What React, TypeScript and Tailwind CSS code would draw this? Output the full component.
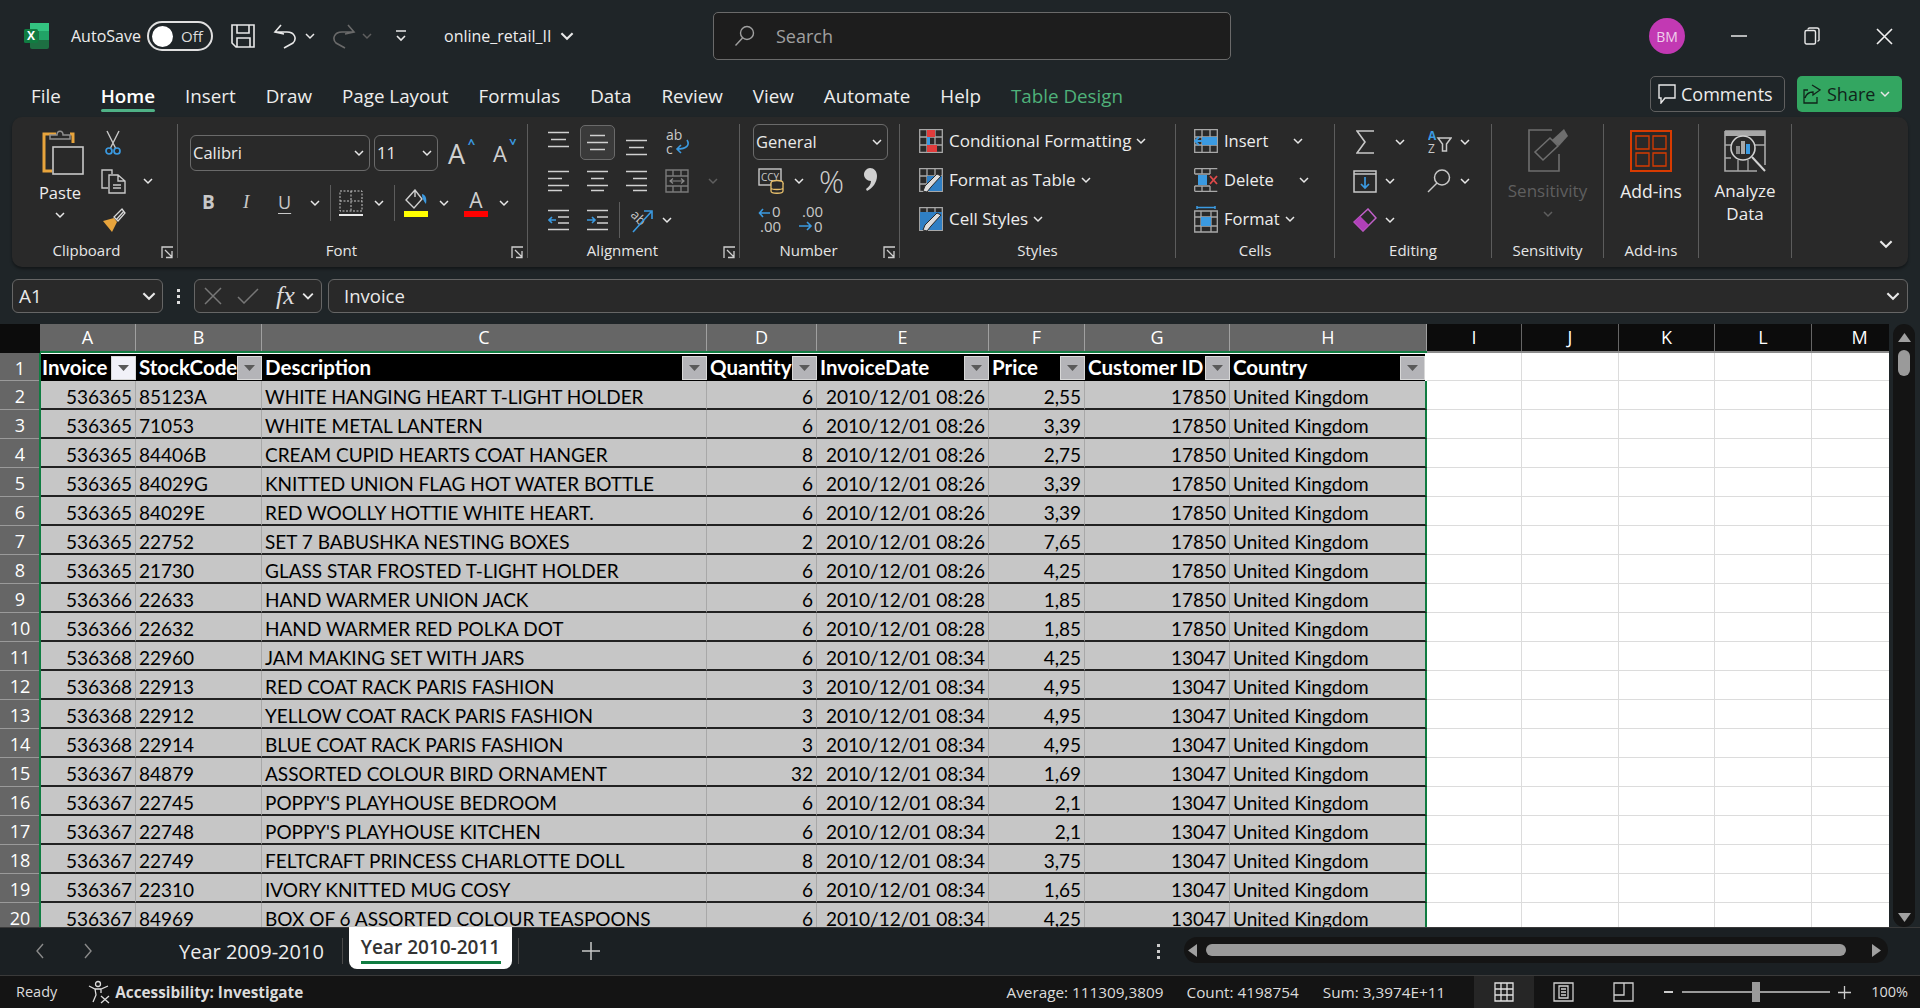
import type { ReactNode } from 'react';

const ui = "font-['Open_Sans',sans-serif]";
const cellFont = "font-['Lato',sans-serif]";

const ROWS = [
  ['536365', '85123A', 'WHITE HANGING HEART T-LIGHT HOLDER', '6', '2010/12/01 08:26', '2,55', '17850'],
  ['536365', '71053', 'WHITE METAL LANTERN', '6', '2010/12/01 08:26', '3,39', '17850'],
  ['536365', '84406B', 'CREAM CUPID HEARTS COAT HANGER', '8', '2010/12/01 08:26', '2,75', '17850'],
  ['536365', '84029G', 'KNITTED UNION FLAG HOT WATER BOTTLE', '6', '2010/12/01 08:26', '3,39', '17850'],
  ['536365', '84029E', 'RED WOOLLY HOTTIE WHITE HEART.', '6', '2010/12/01 08:26', '3,39', '17850'],
  ['536365', '22752', 'SET 7 BABUSHKA NESTING BOXES', '2', '2010/12/01 08:26', '7,65', '17850'],
  ['536365', '21730', 'GLASS STAR FROSTED T-LIGHT HOLDER', '6', '2010/12/01 08:26', '4,25', '17850'],
  ['536366', '22633', 'HAND WARMER UNION JACK', '6', '2010/12/01 08:28', '1,85', '17850'],
  ['536366', '22632', 'HAND WARMER RED POLKA DOT', '6', '2010/12/01 08:28', '1,85', '17850'],
  ['536368', '22960', 'JAM MAKING SET WITH JARS', '6', '2010/12/01 08:34', '4,25', '13047'],
  ['536368', '22913', 'RED COAT RACK PARIS FASHION', '3', '2010/12/01 08:34', '4,95', '13047'],
  ['536368', '22912', 'YELLOW COAT RACK PARIS FASHION', '3', '2010/12/01 08:34', '4,95', '13047'],
  ['536368', '22914', 'BLUE COAT RACK PARIS FASHION', '3', '2010/12/01 08:34', '4,95', '13047'],
  ['536367', '84879', 'ASSORTED COLOUR BIRD ORNAMENT', '32', '2010/12/01 08:34', '1,69', '13047'],
  ['536367', '22745', "POPPY'S PLAYHOUSE BEDROOM", '6', '2010/12/01 08:34', '2,1', '13047'],
  ['536367', '22748', "POPPY'S PLAYHOUSE KITCHEN", '6', '2010/12/01 08:34', '2,1', '13047'],
  ['536367', '22749', 'FELTCRAFT PRINCESS CHARLOTTE DOLL', '8', '2010/12/01 08:34', '3,75', '13047'],
  ['536367', '22310', 'IVORY KNITTED MUG COSY', '6', '2010/12/01 08:34', '1,65', '13047'],
  ['536367', '84969', 'BOX OF 6 ASSORTED COLOUR TEASPOONS', '6', '2010/12/01 08:34', '4,25', '13047'],
];

function Chev({ dim, size = 10 }: { dim?: boolean; size?: number }) {
  return (
    <svg width={size} height={size} viewBox="0 0 10 10" className="shrink-0">
      <path d="M1 3 L5 7 L9 3" fill="none" stroke={dim ? '#5f5f5f' : '#e8e8e8'} strokeWidth="1.5" />
    </svg>
  );
}

function Launcher() {
  return (
    <svg width="13" height="13" viewBox="0 0 13 13" className="shrink-0 mr-[3px] mt-[3px]">
      <path d="M1 12 V1 H12 M4 4 L11 11 M11 5 V11.5 H5" fill="none" stroke="#cfcfcf" strokeWidth="1.3" />
    </svg>
  );
}

function Group({ w, label, launcher, nudge, children }: { w: string; label: string; launcher?: boolean; nudge?: boolean; children: ReactNode }) {
  return (
    <div className={`${w} shrink-0 h-[134px] flex flex-col border-r border-[#5c5c5c]`}>
      <div className="h-[119px]">{children}</div>
      <div className="flex items-center h-[15px] text-[15px] leading-none text-[#e6e6e6]">
        <span className={`flex-1 text-center whitespace-nowrap ${nudge ? 'pr-[6px]' : ''}`}>{label}</span>
        {launcher && <Launcher />}
      </div>
    </div>
  );
}

function Row({ children, className = '' }: { children: ReactNode; className?: string }) {
  return <div className={`h-[36px] mb-[3px] flex items-center ${className}`}>{children}</div>;
}

function Slot({ w = 'w-[39px]', children }: { w?: string; children: ReactNode }) {
  return <div className={`${w} h-full flex items-center justify-center shrink-0`}>{children}</div>;
}

function AlignIcon({ kind }: { kind: 'top' | 'mid' | 'bot' | 'l' | 'c' | 'r' }) {
  const lines: Record<string, string> = {
    top: 'M0 1.5H21M3 8.5H18M0 15.5H21',
    mid: 'M3 1.5H18M0 8.5H21M3 15.5H18',
    bot: 'M0 1.5H21M3 8.5H18M0 15.5H21',
    l: 'M0 1.5H21M0 8.5H14M0 15.5H21M0 20.5H14',
    c: 'M0 1.5H21M4 8.5H17M0 15.5H21M4 20.5H17',
    r: 'M0 1.5H21M7 8.5H21M0 15.5H21M7 20.5H21',
  };
  const isH = kind === 'l' || kind === 'c' || kind === 'r';
  return (
    <svg width="21" height={isH ? 22 : 17} viewBox={isH ? '0 0 21 22' : '0 0 21 17'} className={kind === 'bot' ? 'mt-[10px]' : kind === 'top' ? 'mb-[6px]' : ''}>
      <path d={lines[kind]} stroke="#d0d0d0" strokeWidth="1.6" fill="none" />
    </svg>
  );
}

function IndentIcon({ right }: { right?: boolean }) {
  return (
    <svg width="21" height="22" viewBox="0 0 21 22">
      <path d="M0 1.5H21M10 8H21M10 14H21M0 20.5H21" stroke="#d0d0d0" strokeWidth="1.5" fill="none" />
      <path d={right ? 'M0 11H8M5 8L8 11L5 14' : 'M8 11H1M4 8L1 11L4 14'} stroke="#3b9ae1" strokeWidth="1.6" fill="none" />
    </svg>
  );
}

function GridBase({ children }: { children?: ReactNode }) {
  return (
    <svg width="24" height="24" viewBox="0 0 24 24" className="shrink-0">
      <path d="M.7.7H23.3V23.3H.7ZM.7 8H23.3M.7 16H23.3M8 .7V23.3M16 .7V23.3" fill="none" stroke="#a8a8a8" strokeWidth="1.3" />
      {children}
    </svg>
  );
}

function Brush() {
  return <path d="M22 8 L12 19 L8 24 L4 23 L6 18 L18 6 Z" fill="#dcdcdc" stroke="#292929" strokeWidth="1" />;
}

function ToolRow({ icon, label, size, chevGap }: { icon: ReactNode; label: string; size: string; chevGap: string }) {
  return (
    <Row>
      {icon}
      <span className={`ml-[6px] ${size} text-[#ededed] whitespace-nowrap`}>{label}</span>
      <span className={chevGap}><Chev /></span>
    </Row>
  );
}

function Combo({ w, text }: { w: string; text: string }) {
  return (
    <div className={`${w} h-[36px] rounded-[6px] border border-[#6a6a6a] flex items-center px-[2px] justify-between shrink-0`}>
      <span className={`${ui} text-[16.5px] text-[#e8e8e8]`}>{text}</span>
      <span className="mr-[3px]"><Chev /></span>
    </div>
  );
}

function TitleBar() {
  return (
    <div className="h-[72px] flex items-center shrink-0 relative">
      <svg width="25" height="26" viewBox="0 0 25 26" className="ml-[24px]">
        <rect x="6" y="0" width="19" height="26" rx="2" fill="#1d6f42" />
        <rect x="6" y="0" width="19" height="8" fill="#33c481" />
        <rect x="15" y="8" width="10" height="9" fill="#21a366" />
        <rect x="0" y="6" width="14" height="14" rx="1.5" fill="#107c41" />
        <text x="7" y="17" textAnchor="middle" fontSize="12" fontWeight="700" fill="#fff" fontFamily="Open Sans">X</text>
      </svg>
      <span className="ml-[22px] text-[16px] text-[#ededed] w-[70px]">AutoSave</span>
      <div className="ml-[6px] w-[66px] h-[30px] rounded-full border-2 border-[#e0e0e0] flex items-center pl-[3px]">
        <span className="w-[21px] h-[21px] bg-white rounded-full" />
        <span className="ml-[8px] text-[15px] text-[#dddddd]">Off</span>
      </div>
      <svg width="24" height="24" viewBox="0 0 24 24" className="ml-[18px]">
        <path d="M1 1H23V23H5L1 19ZM6 1V9H18V1M6 23V14H19V23" fill="none" stroke="#e8e8e8" strokeWidth="1.6" />
      </svg>
      <svg width="24" height="26" viewBox="0 0 24 26" className="ml-[18px]">
        <path d="M8 2 L2 9 L11 11 M2 9 H14 C22 9 24 16 20 20 L11 25" fill="none" stroke="#e8e8e8" strokeWidth="1.6" />
      </svg>
      <span className="ml-[8px]"><Chev /></span>
      <svg width="24" height="26" viewBox="0 0 24 26" className="ml-[17px] -scale-x-100">
        <path d="M8 2 L2 9 L11 11 M2 9 H14 C22 9 24 16 20 20 L11 25" fill="none" stroke="#6a6a6a" strokeWidth="1.6" />
      </svg>
      <span className="ml-[6px]"><Chev dim /></span>
      <svg width="12" height="14" viewBox="0 0 12 14" className="ml-[23px]">
        <path d="M1 2H11M2 7L6 11L10 7" fill="none" stroke="#e8e8e8" strokeWidth="1.6" />
      </svg>
      <span className="ml-[37px] text-[16px] text-[#ededed]">online_retail_II</span>
      <span className="ml-[9px]"><Chev size={14} /></span>
      <div className="absolute left-[713px] top-[12px] w-[518px] h-[48px] rounded-[5px] border border-[#6a6a6a] bg-[#1d1d1d] flex items-center">
        <svg width="22" height="22" viewBox="0 0 22 22" className="ml-[20px]">
          <circle cx="13" cy="8" r="6.5" fill="none" stroke="#a0a0a0" strokeWidth="1.4" />
          <path d="M8.5 13 L1.5 20.5" stroke="#a0a0a0" strokeWidth="1.4" />
        </svg>
        <span className="ml-[20px] text-[18px] text-[#a0a0a0]">Search</span>
      </div>
      <div className="ml-auto w-[36px] h-[36px] rounded-full bg-[#c239b3] flex items-center justify-center text-[14px] text-[#f0d0ec]">BM</div>
      <svg width="16" height="16" viewBox="0 0 16 16" className="ml-[46px]"><path d="M0 8H16" stroke="#e8e8e8" strokeWidth="1.5" /></svg>
      <svg width="16" height="18" viewBox="0 0 16 18" className="ml-[57px]">
        <path d="M4 2.5A1.5 1.5 0 0 1 5.5 1H13A2 2 0 0 1 15 3V12A1.5 1.5 0 0 1 13.5 14" fill="none" stroke="#e8e8e8" strokeWidth="1.4" />
        <rect x="1" y="3.5" width="10.5" height="13.5" rx="1.5" fill="none" stroke="#e8e8e8" strokeWidth="1.4" />
      </svg>
      <svg width="17" height="17" viewBox="0 0 17 17" className="ml-[56px] mr-[27px]"><path d="M1 1L16 16M16 1L1 16" stroke="#f0f0f0" strokeWidth="1.6" /></svg>
    </div>
  );
}

function MenuBar() {
  const tabs = ['File', 'Home', 'Insert', 'Draw', 'Page Layout', 'Formulas', 'Data', 'Review', 'View', 'Automate', 'Help'];
  return (
    <div className="h-[45px] shrink-0 flex items-start pl-[31px] pr-[18px]">
      <div className="flex gap-[30px] text-[18.8px] leading-[26px] text-[#ededed] h-[47px] items-center">
        {tabs.map(t =>
          t === 'Home' ? (
            <span key={t} className="relative ml-[10px] font-semibold text-white">
              {t}
              <span className="absolute left-0 right-0 -bottom-[3px] h-[3px] rounded-full bg-[#4fb286]" />
            </span>
          ) : (
            <span key={t}>{t}</span>
          ),
        )}
        <span className="text-[#4fb27a]">Table Design</span>
      </div>
      <div className="ml-auto flex gap-[12px] mt-[4px]">
        <div className="w-[135px] h-[36px] rounded-[5px] border border-[#606060] flex items-center pl-[7px] text-[18px] text-[#ededed]">
          <svg width="18" height="20" viewBox="0 0 18 20" className="mr-[5px]"><path d="M1 1H17V14H7L3 19V14H1Z" fill="none" stroke="#e8e8e8" strokeWidth="1.4" /></svg>
          Comments
        </div>
        <div className="w-[105px] h-[36px] rounded-[5px] bg-[#33a661] flex items-center pl-[6px] text-[18px] text-[#10241a]">
          <svg width="18" height="20" viewBox="0 0 18 20" className="mr-[6px]">
            <path d="M9 1L17 6L10 11V8C5 8 3 11 2 14M14 13V19H1V6H5" fill="none" stroke="#10241a" strokeWidth="1.3" />
          </svg>
          Share
          <span className="ml-[5px]"><Chev /></span>
        </div>
      </div>
    </div>
  );
}

function Ribbon() {
  return (
    <div className="mx-[12px] h-[150px] shrink-0 rounded-[10px] bg-[#292929] pt-[7px] flex shadow-[0_2px_3px_rgba(0,0,0,0.4)]">
      <Group w="w-[166px]" label="Clipboard" launcher>
        <div className="flex h-full">
          <div className="w-[96px] flex flex-col items-center">
            <svg width="42" height="46" viewBox="0 0 42 46" className="mt-[5px] ml-[5px]">
              <path d="M14 5H2V42H10" fill="none" stroke="#e8a43c" strokeWidth="3" />
              <path d="M28 5H31V14" fill="none" stroke="#e8a43c" strokeWidth="3" />
              <path d="M8 10V6H15C15 1 21 1 21 6H28V10Z" fill="#292929" stroke="#8f8f8f" strokeWidth="1.5" />
              <rect x="11" y="18" width="30" height="27" fill="#292929" stroke="#c8c8c8" strokeWidth="1.6" />
            </svg>
            <span className="text-[16.5px] text-[#ededed] mt-[7px] leading-[22px]">Paste</span>
            <span className="mt-[6px]"><Chev /></span>
          </div>
          <div className="flex flex-col">
            <Row>
              <svg width="18" height="26" viewBox="0 0 18 26" className="ml-[-4px] mt-[1px]">
                <path d="M3 1L12 19M15 1L6 19" stroke="#c8c8c8" strokeWidth="1.4" fill="none" />
                <circle cx="5" cy="21" r="3" fill="none" stroke="#3b9ae1" strokeWidth="1.7" />
                <circle cx="13" cy="21" r="3" fill="none" stroke="#3b9ae1" strokeWidth="1.7" />
              </svg>
            </Row>
            <Row>
              <svg width="25" height="25" viewBox="0 0 25 25" className="ml-[-7px]">
                <path d="M8 1H1V19H7M8 1H11V5" fill="none" stroke="#c8c8c8" strokeWidth="1.4" />
                <path d="M8 6H17L24 12V24H8ZM17 6V12H24M12 16H20M12 19H20" fill="none" stroke="#c8c8c8" strokeWidth="1.4" />
              </svg>
              <span className="ml-[17px]"><Chev /></span>
            </Row>
            <Row>
              <svg width="25" height="25" viewBox="0 0 25 25" className="ml-[-7px]">
                <path d="M2 13L13 10L16 14L11 24Z" fill="#e8a43c" />
                <path d="M15 12L23 3M13 9L17 13L24 5L21 1Z" fill="#292929" stroke="#d8d8d8" strokeWidth="1.3" />
              </svg>
            </Row>
          </div>
        </div>
      </Group>

      <Group w="w-[350px]" label="Font" launcher nudge>
        <div className="flex items-center pl-[12px] pt-[11px]">
          <Combo w="w-[180px]" text="Calibri" />
          <span className="w-[4px]" />
          <Combo w="w-[64px]" text="11" />
          <span className={`${ui} ml-[10px] text-[27px] leading-none text-[#d0d0d0] relative`}>A<span className="text-[#3b9ae1] text-[13px] absolute -top-[3px] -right-[10px] font-bold">^</span></span>
          <span className={`${ui} ml-[28px] text-[22px] leading-none text-[#d0d0d0] relative`}>A<span className="absolute -top-[8px] -right-[9px] rotate-180 text-[#3b9ae1] text-[13px] font-bold">^</span></span>
        </div>
        <div className="flex items-center h-[45px] mt-[9px] pl-[24px]">
          <span className="w-[16px] text-[19px] font-bold text-[#c8c8c8]">B</span>
          <span className="ml-[25px] w-[16px] text-[19px] italic text-[#c8c8c8] font-['Liberation_Serif',serif]">I</span>
          <span className="ml-[19px] w-[16px] text-[18px] text-[#c8c8c8] underline underline-offset-4">U</span>
          <span className="ml-[16px]"><Chev /></span>
          <span className="ml-[10px] w-px h-[36px] bg-[#5c5c5c]" />
          <svg width="24" height="26" viewBox="0 0 24 26" className="ml-[8px]">
            <path d="M1 1H23V21H1ZM12 1V21M1 11H23" fill="none" stroke="#c8c8c8" strokeWidth="1" strokeDasharray="2 1.5" />
            <path d="M0 25H24" stroke="#e8e8e8" strokeWidth="2" />
          </svg>
          <span className="ml-[11px]"><Chev /></span>
          <span className="ml-[10px] w-px h-[36px] bg-[#5c5c5c]" />
          <svg width="24" height="28" viewBox="0 0 24 28" className="ml-[9px]">
            <path d="M11 1L2 11L10 19L18 10ZM11 1V8" fill="none" stroke="#d0d0d0" strokeWidth="1.4" />
            <path d="M18 5C22 6 23 10 22 15C20 12 18 10 18 5Z" fill="#3b9ae1" />
            <rect y="22" width="24" height="6" fill="#ffff00" />
          </svg>
          <span className="ml-[11px]"><Chev /></span>
          <span className="ml-[15px] w-[24px] h-[28px] flex flex-col items-center">
            <span className={`${ui} text-[21px] leading-[22px] text-[#d0d0d0]`}>A</span>
            <span className="w-full h-[6px] bg-[#ff0000]" />
          </span>
          <span className="ml-[11px]"><Chev /></span>
        </div>
      </Group>

      <Group w="w-[212px]" label="Alignment" launcher nudge>
        <div className="pl-[11px]">
          <Row>
            <Slot><AlignIcon kind="top" /></Slot>
            <Slot><div className="w-[35px] h-[35px] rounded-[5px] border border-[#6a6a6a] bg-[#3a3a3a] flex items-center justify-center"><AlignIcon kind="mid" /></div></Slot>
            <Slot><AlignIcon kind="bot" /></Slot>
            <Slot w="w-[44px]">
              <svg width="24" height="28" viewBox="0 0 24 28">
                <text x="0" y="12" fontSize="14" fill="#c8c8c8" fontFamily="Open Sans">ab</text>
                <text x="0" y="26" fontSize="14" fill="#c8c8c8" fontFamily="Open Sans">c</text>
                <path d="M21 12C24 17 21 21 11 21M15 17L11 21L15 25" fill="none" stroke="#3b9ae1" strokeWidth="1.6" />
              </svg>
            </Slot>
          </Row>
          <Row>
            <Slot><AlignIcon kind="l" /></Slot>
            <Slot><AlignIcon kind="c" /></Slot>
            <Slot><AlignIcon kind="r" /></Slot>
            <Slot w="w-[42px]">
              <svg width="24" height="24" viewBox="0 0 24 24">
                <path d="M1 1H23V23H1ZM1 7H23M1 17H23M8 1V7M16 1V7M8 17V23M16 17V23" fill="none" stroke="#7a7a7a" strokeWidth="1.4" />
                <path d="M5 12H19M8 9.5L5 12L8 14.5M16 9.5L19 12L16 14.5" fill="none" stroke="#8a8a8a" strokeWidth="1.2" />
              </svg>
            </Slot>
            <span className="ml-[10px]"><Chev dim /></span>
          </Row>
          <Row>
            <Slot><IndentIcon /></Slot>
            <Slot><IndentIcon right /></Slot>
            <span className="w-px h-[36px] bg-[#5c5c5c] ml-[2px]" />
            <svg width="26" height="26" viewBox="0 0 26 26" className="ml-[9px]">
              <text x="2" y="14" fontSize="13" fill="#c8c8c8" fontFamily="Open Sans" transform="rotate(45 8 10)">ab</text>
              <path d="M4 25L22 5M15 4H23V12" fill="none" stroke="#3b9ae1" strokeWidth="1.6" />
            </svg>
            <span className="ml-[7px]"><Chev /></span>
          </Row>
        </div>
      </Group>

      <Group w="w-[160px]" label="Number" launcher nudge>
        <div className="pl-[13px]">
          <Row><Combo w="w-[135px]" text="General" /></Row>
          <Row>
            <svg width="26" height="26" viewBox="0 0 26 26" className="ml-[5px]">
              <rect x="1" y="1" width="22" height="16" fill="none" stroke="#c8c8c8" strokeWidth="1.4" />
              <text x="3" y="13" fontSize="10" fill="#c8c8c8" fontFamily="Open Sans">CCY</text>
              <ellipse cx="19" cy="15" rx="6" ry="2.5" fill="#292929" stroke="#e8c06c" strokeWidth="1.3" />
              <path d="M13 15V23C13 26 25 26 25 23V15M13 20C13 22 25 22 25 20" fill="#292929" stroke="#e8c06c" strokeWidth="1.3" />
            </svg>
            <span className="ml-[10px]"><Chev /></span>
            <span className={`${ui} ml-[15px] text-[31px] leading-none text-[#d0d0d0] font-light`}>%</span>
            <svg width="13" height="23" viewBox="0 0 13 23" className="ml-[20px] -mt-[3px]">
              <path d="M6 0C10 0 13 3 13 8C13 14 9 20 3 23L2 21C5 19 7 16 7 13C3 13 0 10 0 6.5C0 3 3 0 6 0Z" fill="#d0d0d0" />
            </svg>
          </Row>
          <Row className="-mt-px">
            <svg width="26" height="28" viewBox="0 0 26 28" className="ml-[5px]">
              <text x="14" y="12" fontSize="15" fill="#c8c8c8" fontFamily="Open Sans">0</text>
              <text x="2" y="27" fontSize="15" fill="#c8c8c8" fontFamily="Open Sans">.00</text>
              <path d="M12 8H2M5 4L1.5 8L5 12" fill="none" stroke="#3b9ae1" strokeWidth="1.6" />
            </svg>
            <svg width="26" height="28" viewBox="0 0 26 28" className="ml-[13px]">
              <text x="5" y="12" fontSize="15" fill="#c8c8c8" fontFamily="Open Sans">.00</text>
              <text x="17" y="27" fontSize="15" fill="#c8c8c8" fontFamily="Open Sans">0</text>
              <path d="M2 21H14M10 17L14 21L10 25" fill="none" stroke="#3b9ae1" strokeWidth="1.6" />
            </svg>
          </Row>
        </div>
      </Group>

      <Group w="w-[276px]" label="Styles">
        <div className="pl-[19px] -mt-px">
          <ToolRow
            label="Conditional Formatting"
            size="text-[17px]"
            chevGap="ml-[5px]"
            icon={
              <GridBase>
                <rect x="8" y="1" width="8" height="7" fill="#e03c3c" />
                <rect x="8" y="8" width="3" height="8" fill="#3b9ae1" />
                <rect x="8" y="16" width="10" height="7" fill="#e03c3c" />
              </GridBase>
            }
          />
          <ToolRow label="Format as Table" size="text-[17px]" chevGap="ml-[5px]" icon={<GridBase><rect x="8" y="8" width="15" height="15" fill="#2f7fc4" /><Brush /></GridBase>} />
          <ToolRow label="Cell Styles" size="text-[17px]" chevGap="ml-[5px]" icon={<GridBase><rect x="1" y="5" width="22" height="18" fill="#2f7fc4" /><Brush /></GridBase>} />
        </div>
      </Group>

      <Group w="w-[159px]" label="Cells">
        <div className="pl-[18px] -mt-px">
          <ToolRow
            label="Insert"
            size="text-[16.5px]"
            chevGap="ml-[25px]"
            icon={
              <GridBase>
                <rect x="8" y="8" width="15" height="8" fill="#3b9ae1" />
                <path d="M11 12H1M5 8L1 12L5 16" fill="none" stroke="#3b9ae1" strokeWidth="1.8" />
              </GridBase>
            }
          />
          <ToolRow
            label="Delete"
            size="text-[16.5px]"
            chevGap="ml-[25px]"
            icon={
              <svg width="24" height="24" viewBox="0 0 24 24" className="shrink-0">
                <path d="M.7.7H23.3M.7 23.3H23.3M.7 .7V6M.7 18V23.3M8 .7V6M8 18V23.3M16 .7V6M16 18V23.3M.7 6H16M.7 18H16" fill="none" stroke="#a8a8a8" strokeWidth="1.3" />
                <rect x="4" y="7" width="9" height="10" fill="#3b9ae1" />
                <path d="M16 8L23 16M23 8L16 16" stroke="#e04a4a" strokeWidth="1.8" />
              </svg>
            }
          />
          <ToolRow
            label="Format"
            size="text-[16.5px]"
            chevGap="ml-[5px]"
            icon={
              <svg width="24" height="27" viewBox="0 0 24 27" className="shrink-0">
                <path d="M3 1.5H21M3 0V3M21 0V3" stroke="#3b9ae1" strokeWidth="1.5" />
                <path d="M.7 5H23.3V26H.7ZM.7 11H23.3M.7 20H23.3M7 5V26M17 5V26" fill="none" stroke="#a8a8a8" strokeWidth="1.3" />
                <rect x="7" y="11" width="10" height="9" fill="#3b9ae1" />
              </svg>
            }
          />
        </div>
      </Group>

      <Group w="w-[157px]" label="Editing">
        <div className="flex flex-col">
          <Row>
            <Slot w="w-[60px]">
              <svg width="18" height="24" viewBox="0 0 18 24"><path d="M18 1H1L9 12L1 23H18" fill="none" stroke="#c8c8c8" strokeWidth="1.6" /></svg>
            </Slot>
            <Chev />
            <Slot w="w-[62px]">
              <svg width="24" height="24" viewBox="0 0 24 24" className="ml-[8px]">
                <text x="0" y="10" fontSize="12" fill="#3b9ae1" fontWeight="700" fontFamily="Open Sans">A</text>
                <text x="0" y="23" fontSize="12" fill="#c8c8c8" fontFamily="Open Sans">Z</text>
                <path d="M10 8H23L18.500 14V21H14.500V14Z" fill="none" stroke="#c8c8c8" strokeWidth="1.5" />
              </svg>
            </Slot>
            <span className="-ml-[7px]"><Chev /></span>
          </Row>
          <Row>
            <Slot w="w-[60px]">
              <svg width="24" height="23" viewBox="0 0 24 23">
                <path d="M1 1H23V22H1ZM1 4H23" fill="none" stroke="#c8c8c8" strokeWidth="1.5" />
                <path d="M12 7V18M8 14L12 18L16 14" fill="none" stroke="#3b9ae1" strokeWidth="1.7" />
              </svg>
            </Slot>
            <span className="-ml-[10px]"><Chev /></span>
            <Slot w="w-[80px]">
              <svg width="24" height="24" viewBox="0 0 24 24" className="ml-[8px]">
                <circle cx="15" cy="8.500" r="7.500" fill="none" stroke="#c8c8c8" strokeWidth="1.5" />
                <path d="M10 14L1 23" stroke="#c8c8c8" strokeWidth="1.5" />
              </svg>
            </Slot>
            <span className="-ml-[15px]"><Chev /></span>
          </Row>
          <Row>
            <Slot w="w-[60px]">
              <svg width="24" height="24" viewBox="0 0 24 24">
                <path d="M15 1L23 10L10 23L1 14Z" fill="none" stroke="#c060c8" strokeWidth="1.5" />
                <path d="M7 8L16 17L10 23L1 14Z" fill="#b040b8" />
              </svg>
            </Slot>
            <span className="-ml-[10px]"><Chev /></span>
          </Row>
        </div>
      </Group>

      <Group w="w-[112px]" label="Sensitivity">
        <div className="flex flex-col items-center">
          <svg width="40" height="44" viewBox="0 0 40 44" className="mt-[4px]">
            <path d="M24 2H1V43H31V26" fill="none" stroke="#6e6e6e" strokeWidth="1.6" />
            <path d="M7 24L22 10L30 18L15 32Z" fill="none" stroke="#6e6e6e" strokeWidth="1.6" />
            <path d="M24 12L36 1L40 8L31 18Z" fill="#6e6e6e" />
          </svg>
          <span className="mt-[8px] text-[17px] leading-[22px] text-[#5f5f5f]">Sensitivity</span>
          <span className="mt-[7px]"><Chev dim /></span>
        </div>
      </Group>

      <Group w="w-[95px]" label="Add-ins">
        <div className="flex flex-col items-center">
          <svg width="42" height="42" viewBox="0 0 42 42" className="mt-[6px]">
            <rect x="1" y="1" width="40" height="40" fill="none" stroke="#d83b01" strokeWidth="2" />
            <path d="M6 6H19V19H6ZM23 6H36V19H23ZM6 23H19V36H6ZM23 23H36V36H23Z" fill="none" stroke="#d83b01" strokeWidth="1.3" />
          </svg>
          <span className="mt-[8px] text-[17.5px] leading-[22px] text-[#ededed] whitespace-nowrap">Add-ins</span>
        </div>
      </Group>

      <Group w="w-[93px]" label="">
        <div className="flex flex-col items-center">
          <svg width="42" height="42" viewBox="0 0 42 42" className="mt-[6px]">
            <path d="M1 1H41V35M1 1V41H33" fill="none" stroke="#a8a8a8" strokeWidth="1.6" />
            <rect x="1" y="1" width="40" height="5" fill="#a8a8a8" />
            <path d="M1 15H7M1 28H7M31 15H41M14 30V41M24 30V41" stroke="#a8a8a8" strokeWidth="1.3" />
            <circle cx="19" cy="18" r="12" fill="#292929" stroke="#d0d0d0" strokeWidth="1.6" />
            <rect x="12" y="16" width="4" height="8" fill="#8a8a8a" />
            <rect x="17" y="11" width="4" height="13" fill="#a8a8a8" />
            <rect x="22" y="14" width="4" height="10" fill="#3b9ae1" />
            <path d="M28 27L41 41" stroke="#d0d0d0" strokeWidth="2" />
          </svg>
          <span className="mt-[7px] text-[17px] leading-[23px] text-[#ededed] text-center">Analyze<br />Data</span>
        </div>
      </Group>

      <div className="flex-1 flex justify-end items-end pr-[15px] pb-[16px]">
        <Chev size={14} />
      </div>
    </div>
  );
}

function FormulaBar() {
  return (
    <div className="h-[34px] mt-[12px] mx-[12px] flex shrink-0 text-[#e8e8e8]">
      <div className="w-[151px] rounded-[6px] border border-[#666] bg-[#292929] flex items-center justify-between px-[6px] text-[19px]">
        A1 <Chev size={14} />
      </div>
      <div className="w-[31px] flex flex-col items-center justify-center gap-[3px]">
        <span className="w-[3px] h-[3px] bg-[#ddd]" />
        <span className="w-[3px] h-[3px] bg-[#ddd]" />
        <span className="w-[3px] h-[3px] bg-[#ddd]" />
      </div>
      <div className="w-[128px] rounded-[6px] border border-[#666] bg-[#292929] flex items-center pl-[9px]">
        <svg width="18" height="18" viewBox="0 0 18 18"><path d="M1 1L17 17M17 1L1 17" stroke="#777" strokeWidth="1.5" /></svg>
        <svg width="22" height="16" viewBox="0 0 22 16" className="ml-[15px]"><path d="M1 9L7 15L21 1" fill="none" stroke="#777" strokeWidth="1.5" /></svg>
        <span className="ml-[17px] text-[26px] italic leading-none text-[#dcdcdc] font-['Liberation_Serif',serif]">fx</span>
        <span className="ml-[7px]"><Chev size={12} /></span>
      </div>
      <div className="ml-[6px] flex-1 rounded-[6px] border border-[#666] bg-[#292929] flex items-center pl-[15px] pr-[7px] justify-between text-[18.5px]">
        Invoice <Chev size={14} />
      </div>
    </div>
  );
}

const SEL = [
  ['A', 'w-[96px]'],
  ['B', 'w-[126px]'],
  ['C', 'w-[445px]'],
  ['D', 'w-[110px]'],
  ['E', 'w-[172px]'],
  ['F', 'w-[96px]'],
  ['G', 'w-[145px]'],
  ['H', 'w-[197px]'],
];
const BLANK = [
  ['I', 'w-[95px]'],
  ['J', 'w-[97px]'],
  ['K', 'w-[96px]'],
  ['L', 'w-[97px]'],
  ['M', 'w-[96px]'],
];
const HEAD = ['Invoice', 'StockCode', 'Description', 'Quantity', 'InvoiceDate', 'Price', 'Customer ID', 'Country'];

function FilterBtn({ light }: { light?: boolean }) {
  return (
    <span className={`ml-auto w-[25px] h-[24px] shrink-0 flex items-center justify-center border border-[#d8d8d8] ${light ? 'bg-[#f1f1f8]' : 'bg-[#b4b4b8]'}`}>
      <svg width="11" height="6" viewBox="0 0 11 6"><path d="M0 0H11L5.5 6Z" fill="#5a5a5a" /></svg>
    </span>
  );
}

function RowNum({ n }: { n: number }) {
  return (
    <div className="h-full w-[40px] shrink-0 bg-[#666] border-b border-[#9a9a9a] flex items-center justify-center pt-[3px] text-[18px] text-white">{n}</div>
  );
}

function BlankCells() {
  return (
    <>
      {BLANK.map(([c, w]) => (
        <div key={c} className={`${w} shrink-0 h-full bg-white border-r border-b border-[#dcdcdc]`} />
      ))}
    </>
  );
}

function Sheet() {
  return (
    <div className="mt-[11px] h-[603px] flex shrink-0 overflow-hidden">
      <div className="w-[1889px] shrink-0 flex flex-col overflow-hidden">
        {/* column letters */}
        <div className="flex h-[27px] shrink-0 text-[18px] text-white">
          <div className="w-[40px] shrink-0 bg-[#0c0c0c]" />
          {SEL.map(([c, w]) => (
            <div key={c} className={`${w} shrink-0 bg-[#666] border-r border-[#a0a0a0] flex items-center justify-center`}>{c}</div>
          ))}
          {BLANK.map(([c, w]) => (
            <div key={c} className={`${w} shrink-0 bg-[#0c0c0c] border-r border-[#666] flex items-center justify-center`}>{c}</div>
          ))}
        </div>
        <div className="flex h-[2px] shrink-0">
          <div className="w-[40px] bg-[#0c0c0c]" />
          <div className="w-[1387px] bg-[#107c41]" />
          <div className="flex-1 bg-[#8a8a8a]" />
        </div>
        {/* header row */}
        <div className="flex h-[28px] shrink-0">
          <RowNum n={1} />
          <div className="flex border-l-2 border-[#107c41] -ml-px shrink-0">
            {SEL.map(([c, w], i) => (
              <div key={c} className={`${i === 0 ? 'w-[95px] pl-[1px]' : `${w} pl-[3px]`} shrink-0 ${i === 7 ? 'border-r-2 border-[#107c41]' : ''} h-full bg-black border-t border-white flex items-center text-[20.5px] font-bold text-white whitespace-nowrap ${cellFont}`}>
                <span>{HEAD[i]}</span>
                <FilterBtn light={i === 0} />
              </div>
            ))}
          </div>
          <BlankCells />
        </div>
        {ROWS.map((r, idx) => (
          <div key={idx} className="flex h-[29px] shrink-0">
            <RowNum n={idx + 2} />
            <div className={`flex border-l-2 border-[#107c41] -ml-px shrink-0 text-[19px] text-black ${cellFont}`}>
              {SEL.map(([c, w], i) => {
                const right = i === 0 || i === 3 || i === 4 || i === 5 || i === 6;
                const val = i === 7 ? 'United Kingdom' : r[i];
                return (
                  <div key={c} className={`${i === 0 ? 'w-[95px]' : w} shrink-0 h-full bg-[#c6c6c6] border-b-2 border-b-[#222] pt-[5px] ${i === 7 ? 'border-r-2 border-r-[#107c41]' : 'border-r border-r-[#a8a8a8]'} flex items-center ${right ? 'justify-end pr-[3px]' : 'pl-[3px]'} whitespace-nowrap overflow-hidden`}>
                    {val}
                  </div>
                );
              })}
            </div>
            <BlankCells />
          </div>
        ))}
      </div>
      {/* vertical scrollbar */}
      <div className="flex-1">
        <div className="ml-[4px] w-[22px] h-full rounded-full bg-[#141414] flex flex-col items-center pt-[9px] pb-[5px]">
          <svg width="13" height="9" viewBox="0 0 13 9"><path d="M6.5 0L13 9H0Z" fill="#a0a0a0" /></svg>
          <span className="mt-[8px] w-[12px] h-[26px] rounded-full bg-[#9a9a9a]" />
          <svg width="13" height="9" viewBox="0 0 13 9" className="mt-auto"><path d="M6.5 9L13 0H0Z" fill="#a0a0a0" /></svg>
        </div>
      </div>
    </div>
  );
}

function Tabs() {
  return (
    <div className="h-[48px] shrink-0 flex items-start bg-[#1b2023] text-[#ededed] border-t border-[#3a3a3a]">
      <svg width="10" height="16" viewBox="0 0 10 16" className="ml-[35px] mt-[15px]"><path d="M8 1L2 8L8 15" fill="none" stroke="#8a8a8a" strokeWidth="1.4" /></svg>
      <svg width="10" height="16" viewBox="0 0 10 16" className="ml-[38px] mt-[15px]"><path d="M2 1L8 8L2 15" fill="none" stroke="#8a8a8a" strokeWidth="1.4" /></svg>
      <span className="ml-[86px] mt-[10px] text-[20px] leading-[28px] w-[163px] whitespace-nowrap">Year 2009-2010</span>
      <span className="mt-[10px] w-px h-[26px] bg-[#4a4a4a]" />
      <div className="ml-[6px] w-[163px] h-[42px] -mt-px bg-white rounded-b-[8px] flex flex-col items-center pt-[7px]">
        <span className="text-[19px] leading-[26px] font-semibold text-[#333]">Year 2010-2011</span>
        <span className="mt-[1px] w-[140px] h-[3px] bg-[#107c41]" />
      </div>
      <span className="ml-[6px] mt-[10px] w-px h-[26px] bg-[#4a4a4a]" />
      <svg width="18" height="18" viewBox="0 0 18 18" className="ml-[63px] mt-[14px]"><path d="M9 0V18M0 9H18" stroke="#c8c8c8" strokeWidth="1.5" /></svg>
      <div className="ml-[557px] mt-[16px] flex flex-col gap-[3px]">
        <span className="w-[3px] h-[3px] bg-[#ccc]" />
        <span className="w-[3px] h-[3px] bg-[#ccc]" />
        <span className="w-[3px] h-[3px] bg-[#ccc]" />
      </div>
      <div className="ml-[24px] mt-[9px] w-[704px] h-[26px] rounded-full bg-[#141414] flex items-center pl-[4px] pr-[7px]">
        <svg width="9" height="13" viewBox="0 0 9 13"><path d="M0 6.5L9 0V13Z" fill="#a0a0a0" /></svg>
        <span className="ml-[9px] w-[640px] h-[12px] rounded-full bg-[#9a9a9a]" />
        <svg width="9" height="13" viewBox="0 0 9 13" className="ml-auto"><path d="M9 6.5L0 0V13Z" fill="#a0a0a0" /></svg>
      </div>
    </div>
  );
}

function StatusBar() {
  return (
    <div className="h-[33px] shrink-0 bg-[#141414] border-t border-[#3a3a3a] flex items-center text-[15.3px] text-[#dcdcdc]">
      <span className="ml-[16px] text-[14.5px]">Ready</span>
      <svg width="24" height="24" viewBox="0 0 24 24" className="ml-[30px]">
        <circle cx="11" cy="4" r="2.5" fill="none" stroke="#ddd" strokeWidth="1.3" />
        <path d="M2 6L8 9H14L21 6M8 9L9 15L6 22M14 9V13M14 16L22 23M22 16L14 23" fill="none" stroke="#ddd" strokeWidth="1.3" />
      </svg>
      <span className="ml-[4px] font-bold">Accessibility: Investigate</span>
      <div className="ml-auto flex items-center h-full">
        <span>Average: 111309,3809</span>
        <span className="ml-[23px]">Count: 4198754</span>
        <span className="ml-[24px]">Sum: 3,3974E+11</span>
        <div className="ml-[29px] w-[60px] h-full bg-[#262626] flex items-center justify-center">
          <svg width="20" height="20" viewBox="0 0 20 20"><path d="M1 1H19V19H1ZM7 1V19M13 1V19M1 7H19M1 13H19" fill="none" stroke="#e0e0e0" strokeWidth="1.3" /></svg>
        </div>
        <svg width="21" height="20" viewBox="0 0 21 20" className="ml-[19px]">
          <path d="M1 1H20V19H1ZM6 4H15V16H6ZM8 7H13M8 10H13M8 13H13" fill="none" stroke="#d0d0d0" strokeWidth="1.3" />
        </svg>
        <svg width="21" height="20" viewBox="0 0 21 20" className="ml-[39px]">
          <path d="M1 1H20V19H1ZM1 13H11V1" fill="none" stroke="#d0d0d0" strokeWidth="1.3" />
        </svg>
        <span className="ml-[30px] w-[9px] h-[1.5px] bg-[#ccc]" />
        <div className="ml-[9px] w-[148px] h-[2px] bg-[#9a9a9a] flex items-center pl-[70px]">
          <span className="w-[8px] h-[20px] bg-[#9a9a9a]" />
        </div>
        <svg width="13" height="13" viewBox="0 0 13 13" className="ml-[8px]"><path d="M6.5 0V13M0 6.5H13" stroke="#ccc" strokeWidth="1.3" /></svg>
        <span className="ml-[20px] mr-[12px] text-[14.5px]">100%</span>
      </div>
    </div>
  );
}

export default function App() {
  return (
    <div className={`w-[1920px] h-[1008px] overflow-hidden flex flex-col bg-[#1f2528] ${ui}`}>
      <TitleBar />
      <MenuBar />
      <Ribbon />
      <FormulaBar />
      <Sheet />
      <Tabs />
      <StatusBar />
    </div>
  );
}
